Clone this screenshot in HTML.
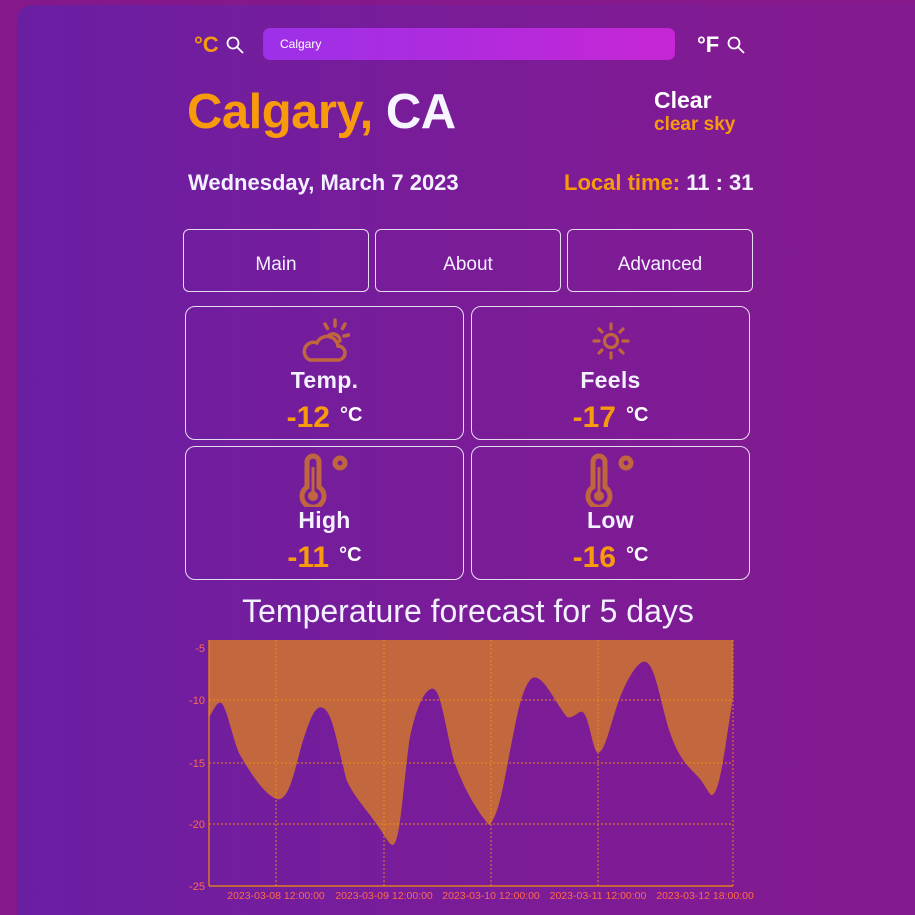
<!DOCTYPE html>
<html><head><meta charset="utf-8"><style>
*{margin:0;padding:0;box-sizing:border-box}
body{width:915px;height:915px;overflow:hidden;background:#85198b;font-family:"Liberation Sans",sans-serif;color:#f3f0ff;position:relative}
.panel{position:absolute;left:17px;top:5px;width:898px;height:910px;border-radius:16px 0 0 0;background:linear-gradient(90deg,#6a1fa3,#7a1c98 50%,#841a8f)}
.a{position:absolute;white-space:nowrap}
.or{color:#f79b0d}
.tab{position:absolute;top:229px;height:63px;border:1px solid #e6dcf0;border-radius:6px;font-size:19px;text-align:center;line-height:70px}
.card{position:absolute;width:279px;height:134px;border:1px solid #e6dcf0;border-radius:10px;text-align:center}
.card .l{position:absolute;top:60px;width:100%;font-size:23px;font-weight:bold;letter-spacing:0.3px}
.card .v{position:absolute;top:94px;width:100%;font-size:30px;font-weight:bold}
.card .v span.u{color:#fff;font-size:20px;vertical-align:6px;margin-left:10px}
.card svg{position:absolute;left:50%;transform:translateX(-50%)}
</style></head><body>
<div class="panel"></div>
<div class="a or" style="left:194px;top:32px;font-size:22px;font-weight:bold">°C</div>
<svg class="a" style="left:225px;top:35px" width="20" height="20" viewBox="0 0 20 20"><circle cx="8" cy="8" r="5.5" fill="none" stroke="#fff" stroke-width="1.8"/><line x1="12" y1="12" x2="18" y2="18" stroke="#fff" stroke-width="1.8"/></svg>
<div class="a" style="left:263px;top:28px;width:412px;height:32px;border-radius:7px;background:linear-gradient(90deg,#9c30e8,#c626d3)"></div>
<div class="a" style="left:280px;top:37px;font-size:12px;color:#fff">Calgary</div>
<div class="a" style="left:697px;top:32px;font-size:22px;font-weight:bold;color:#fff">°F</div>
<svg class="a" style="left:726px;top:35px" width="20" height="20" viewBox="0 0 20 20"><circle cx="8" cy="8" r="5.5" fill="none" stroke="#fff" stroke-width="1.8"/><line x1="12" y1="12" x2="18" y2="18" stroke="#fff" stroke-width="1.8"/></svg>
<div class="a" style="left:187px;top:84px;font-size:49px;font-weight:bold;letter-spacing:-0.5px"><span class="or">Calgary,</span> <span style="color:#f6f4ff">CA</span></div>
<div class="a" style="left:654px;top:87px;font-size:23px;font-weight:bold;color:#fff">Clear</div>
<div class="a or" style="left:654px;top:114px;font-size:19px;font-weight:bold">clear sky</div>
<div class="a" style="left:188px;top:170px;font-size:22px;font-weight:bold">Wednesday, March 7 2023</div>
<div class="a" style="left:564px;top:170px;font-size:22px;font-weight:bold"><span class="or">Local time:</span> 11 : 31</div>
<div class="tab" style="left:183px;width:186px">Main</div>
<div class="tab" style="left:375px;width:186px">About</div>
<div class="tab" style="left:567px;width:186px">Advanced</div>

<div class="card" style="left:185px;top:306px">
<svg width="50" height="46" viewBox="0 0 50 46" style="top:10px"><g fill="none" stroke="#c0663f" stroke-width="3.5" stroke-linecap="round"><path d="M10 43 H38 a7 7 0 0 0 0-14 a11 11 0 0 0-21-3 a9 9 0 0 0-7 17z"/><path d="M28 19 a7 7 0 0 1 12 5"/><line x1="35" y1="3" x2="35" y2="9"/><line x1="25" y1="7" x2="27.5" y2="11.5"/><line x1="45" y1="7" x2="42.5" y2="11.5"/><line x1="49" y1="18" x2="44" y2="19"/></g></svg>
<div class="l">Temp.</div><div class="v"><span class="or">-12</span><span class="u">°C</span></div></div>
<div class="card" style="left:471px;top:306px">
<svg width="40" height="40" viewBox="0 0 40 40" style="top:14px"><g fill="none" stroke="#c0663f" stroke-width="3.2" stroke-linecap="round"><circle cx="20" cy="20" r="6.5"/><line x1="20" y1="3" x2="20" y2="8"/><line x1="20" y1="32" x2="20" y2="37"/><line x1="3" y1="20" x2="8" y2="20"/><line x1="32" y1="20" x2="37" y2="20"/><line x1="8" y1="8" x2="11" y2="11"/><line x1="29" y1="29" x2="32" y2="32"/><line x1="32" y1="8" x2="29" y2="11"/><line x1="8" y1="32" x2="11" y2="29"/></g></svg>
<div class="l">Feels</div><div class="v"><span class="or">-17</span><span class="u">°C</span></div></div>
<div class="card" style="left:185px;top:446px">
<svg width="52" height="54" viewBox="0 0 52 54" style="top:6px"><g fill="none" stroke="#c0663f" stroke-width="5"><path d="M8 34 V9 a6 6 0 0 1 12 0 V34 a11 11 0 1 1-12 0z"/><circle cx="41" cy="10" r="5"/></g><circle cx="14" cy="43" r="5" fill="#c0663f"/><line x1="14" y1="14" x2="14" y2="40" stroke="#c0663f" stroke-width="3"/></svg>
<div class="l">High</div><div class="v"><span class="or">-11</span><span class="u">°C</span></div></div>
<div class="card" style="left:471px;top:446px">
<svg width="52" height="54" viewBox="0 0 52 54" style="top:6px"><g fill="none" stroke="#c0663f" stroke-width="5"><path d="M8 34 V9 a6 6 0 0 1 12 0 V34 a11 11 0 1 1-12 0z"/><circle cx="41" cy="10" r="5"/></g><circle cx="14" cy="43" r="5" fill="#c0663f"/><line x1="14" y1="14" x2="14" y2="40" stroke="#c0663f" stroke-width="3"/></svg>
<div class="l">Low</div><div class="v"><span class="or">-16</span><span class="u">°C</span></div></div>

<div class="a" style="left:0;width:936px;text-align:center;top:593px;font-size:32px">Temperature forecast for 5 days</div>

<svg class="a" style="left:0;top:0" width="915" height="915">
<g transform="translate(180,630) scale(0.37,0.3333)">
<path fill="#c3673f" d="M80 30 L80 260 C90 240 100 218 108 218 C125 218 140 320 160 370 C185 420 230 500 265 508 C295 510 310 420 330 340 C345 290 360 232 380 232 C410 232 420 320 450 450 C470 500 505 540 530 580 C550 610 565 645 575 645 C595 640 600 500 620 330 C640 220 665 176 682 176 C705 176 715 280 740 390 C760 460 800 540 835 585 C865 560 880 420 905 290 C920 200 940 142 958 142 C985 142 1010 210 1045 260 C1060 270 1075 245 1085 245 C1105 245 1115 368 1130 368 C1150 368 1165 270 1190 200 C1215 130 1240 95 1255 95 C1285 95 1300 230 1325 310 C1350 390 1375 410 1400 440 C1420 465 1430 495 1437 495 C1460 495 1475 330 1495 200 L1495 30 Z"/>
</g>
<g stroke="#f0900c" stroke-width="1" stroke-dasharray="2,2" fill="none" opacity="0.9">
<line x1="209" y1="700" x2="733" y2="700"/><line x1="209" y1="763" x2="733" y2="763"/><line x1="209" y1="824" x2="733" y2="824"/>
<line x1="276" y1="640" x2="276" y2="886"/><line x1="384" y1="640" x2="384" y2="886"/><line x1="491" y1="640" x2="491" y2="886"/><line x1="598" y1="640" x2="598" y2="886"/><line x1="733" y1="640" x2="733" y2="886"/>
</g>
<g stroke="#f0900c" stroke-width="1.2"><line x1="209" y1="640" x2="209" y2="886"/><line x1="209" y1="886" x2="733" y2="886"/></g>
<g fill="#ff6a4a" font-family="Liberation Sans,sans-serif" font-size="11" text-anchor="end">
<text x="205" y="652">-5</text><text x="205" y="704">-10</text><text x="205" y="767">-15</text><text x="205" y="828">-20</text><text x="205" y="890">-25</text>
</g>
<g fill="#ff6a4a" font-family="Liberation Sans,sans-serif" font-size="10.5" text-anchor="middle">
<text x="276" y="899">2023-03-08 12:00:00</text><text x="384" y="899">2023-03-09 12:00:00</text><text x="491" y="899">2023-03-10 12:00:00</text><text x="598" y="899">2023-03-11 12:00:00</text><text x="705" y="899">2023-03-12 18:00:00</text>
</g>
</svg>
</body></html>
